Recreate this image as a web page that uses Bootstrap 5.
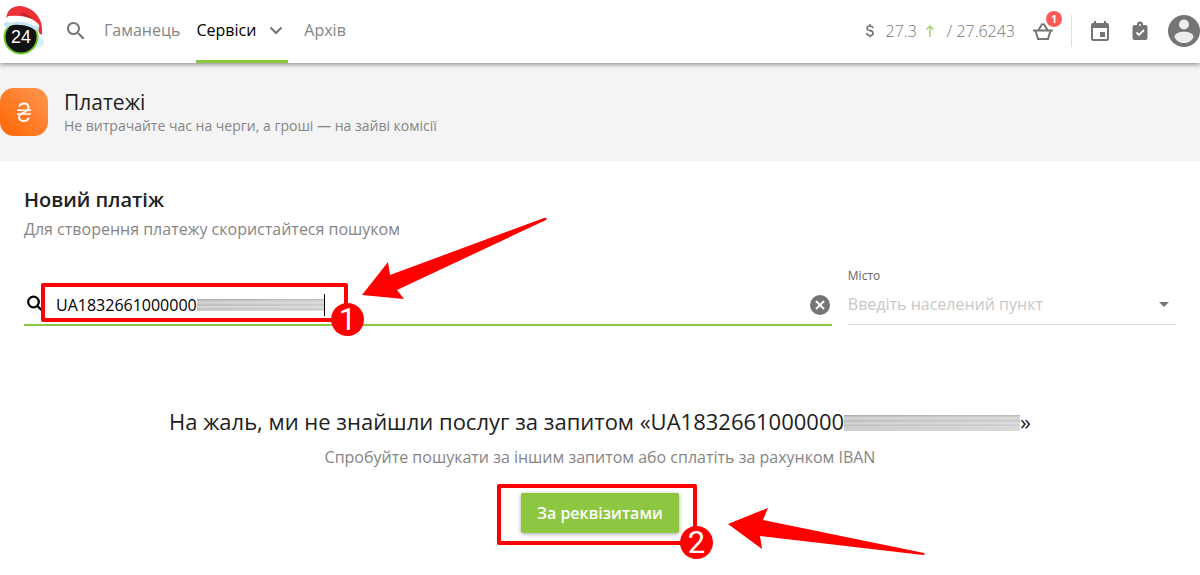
<!DOCTYPE html>
<html lang="uk">
<head>
<meta charset="utf-8">
<meta name="viewport" content="width=device-width, initial-scale=1">
<title>Платежі</title>
<link href="https://cdn.jsdelivr.net/npm/bootstrap@5.3.0/dist/css/bootstrap.min.css" rel="stylesheet">
<style>
  body { font-family: "Open Sans", "Noto Sans", sans-serif; font-size: 16px; line-height: 24px; font-weight: 400; color: #212121; background: #fff; min-height: 100vh; }
  svg { display: block; flex: none; }
  .topbar { height: 63px; background: #fff; box-shadow: 0 1px 5px rgba(0,0,0,.5); z-index: 2; }
  .brand-logo { margin-left: 2px; padding-bottom: 2px; }
  .search-btn { margin-left: 18px; padding-bottom: 2px !important; }
  .icon-btn { background: none; border: 0; padding: 0; color: #757575; }
  .main-menu { gap: 16px; margin-left: 16px; }
  .main-menu .nav-link { color: #858585; padding: 0; height: 63px; display: flex; align-items: center; border-bottom: 3px solid transparent; }
  .main-menu .nav-link.active { color: #000; border-bottom-color: #8dc641; }
  .rates { color: #757575; font-weight: 300; padding-bottom: 2px; }
  .rates .up { color: #a5d46a; }
  .basket-count { position: absolute; left: 15px; top: -8px; width: 16px; height: 16px; border-radius: 50%; background: #ff5a5a; color: #fff; font: 700 10px/16px "Open Sans", sans-serif; text-align: center; }
  .split { width: 1px; height: 32px; background: #ddd; }
  .page-head { background: #f4f4f4; height: 98px; }
  .tile { width: 48px; height: 48px; border-radius: 14px; background: linear-gradient(45deg, #ff6f12 20%, #ff9650); }
  .page-title { font-size: 21px; line-height: 28px; font-weight: 400; }
  .page-sub { font-size: 14px; line-height: 20px; color: #858585; }
  .section-title { font-size: 20px; line-height: 28px; font-weight: 600; margin-bottom: 3px; padding-top: 1px; }
  .muted { color: #858585; }
  .search-grid { display: grid; grid-template-columns: minmax(0, 32fr) minmax(0, 13fr); gap: 16px; margin-top: 27px; }
  .field-label { font-size: 12px; line-height: 16px; color: #666; display: block; }
  .search-box { height: 40px; border-bottom: 2px solid #8dc641; margin-top: 18px; }
  .city-box { height: 41px; border-bottom: 1px solid #ddd; }
  .bare { border: 0; background: none; outline: 0; padding: 0; color: #000; min-width: 0; }
  .bare::placeholder { color: #c8c8c8; opacity: 1; }
  .account { width: 141px; }
  .smear { background: linear-gradient(90deg, rgba(255,255,255,.05), rgba(255,255,255,.25)), linear-gradient(#aaa 0 1px, #cdcdcd 2px 5px, #aaa 6px, #d0d0d0 7px 9px, #b4b4b4 10px, #ccc 11px); }
  .smear-sm { width: 127px; height: 12px; }
  .smear-lg { width: 176px; height: 16px; display: inline-block; vertical-align: -1px; }
  .caret { width: 1px; height: 22px; background: #000; }
  .result-title { font-size: 22px; line-height: 32px; margin: 0 0 8px; padding-top: 7px; }
  .pay-btn { height: 40px; padding: 0 16px; border: 0; border-radius: 2px; background: #8dc641; color: #fff; font-weight: 600; box-shadow: 0 1px 4px rgba(0,0,0,.35); }
  /* Instruction callouts drawn over the form */
  .callout-frame { position: absolute; border: 4px solid #f00; border-radius: 2px; pointer-events: none; }
  .frame-one { left: 17px; top: -3px; width: 307px; height: 39px; }
  .frame-two { left: -24px; top: -9px; right: -18px; bottom: -12px; }
  .step-dot { position: absolute; right: -20px; bottom: -18px; width: 33px; height: 33px; border-radius: 50%; background: #f00; color: #fff; font: 400 31px/34px Roboto, sans-serif; text-align: center; }
  .arrow-one { position: absolute; left: 336px; top: -70px; pointer-events: none; }
  .arrow-two { position: absolute; left: 205px; top: 13px; pointer-events: none; }
</style>
</head>
<body>
<header class="topbar position-relative d-flex align-items-center">
  <a href="#" class="brand-logo" aria-label="24">
    <svg width="44" height="52" viewBox="0 0 44 52">
      <circle cx="37" cy="37" r="5" fill="#d3effb"/>
      <circle cx="19" cy="32" r="17.500" fill="#73c92d"/>
      <circle cx="19" cy="32" r="15.500" fill="#101214"/>
      <path d="M4 14C5 6 9 1 18 1C30 2 42 12 40 29Q37 31 36 23Q27 11 4 14Z" fill="#ed3136"/>
      <path d="M19 7Q28 9 33 18Q25 13 20 12Z" fill="#c62028"/>
      <path d="M4 20C2 14 5 10 10 11C20 10 32 13 37 20C38 23 36 25 33 23C27 19 20 18 14 19Q8 18 4 20Z" fill="#fff"/>
      <path d="M3 22C1 19 3 16 6 17Q9 18 14 17Q21 16 28 19Q34 22 37 21Q37 27 33 25Q26 20 18 20Q8 19 4 24Z" fill="#c3e5f4"/>
      <text x="19" y="38" text-anchor="middle" font-family="Liberation Sans, sans-serif" font-size="18" fill="#fff">24</text>
    </svg>
  </a>
  <button class="icon-btn search-btn" aria-label="Пошук">
    <svg width="24" height="24" viewBox="0 0 24 24" fill="currentColor"><path d="M15.500 14h-.8l-.3-.3A6.500 6.500 0 1 0 13.700 14.400l.3.3v.8l5 5 1.500-1.500zM9.500 14a4.500 4.500 0 1 1 0-9 4.500 4.500 0 0 1 0 9z"/></svg>
  </button>
  <nav class="nav main-menu flex-nowrap">
    <a class="nav-link" href="#">Гаманець</a>
    <a class="nav-link active" href="#">Сервіси
      <svg class="ms-2" width="24" height="24" viewBox="0 0 24 24" fill="none" stroke="#757575" stroke-width="2"><path d="M6.500 9.500l5.500 5.500 5.500-5.500"/></svg>
    </a>
    <a class="nav-link" href="#">Архів</a>
  </nav>
  <div class="d-flex align-items-center ms-auto rates">
    <svg class="me-2" width="16" height="16" viewBox="0 0 16 16" fill="none" stroke="#757575" stroke-width="1.600"><path d="M11 5.200C10.800 3.700 9.600 3 8 3 6.200 3 5 3.900 5 5.200c0 3.200 6.200 1.600 6.200 5 0 1.400-1.300 2.300-3.200 2.300-1.800 0-3.100-.8-3.300-2.500M8 1v2m0 9.500v2"/></svg>
    <span>27.3</span>
    <svg class="up mx-2" width="10" height="24" viewBox="0 0 10 24" fill="none" stroke="currentColor" stroke-width="1.500"><path d="M5 18V7M1.500 10.500L5 7l3.500 3.500"/></svg>
    <span class="ms-1">/ 27.6243</span>
    <button class="icon-btn position-relative ms-3" aria-label="Кошик">
      <svg width="24" height="24" viewBox="0 0 24 24" fill="none" stroke="currentColor" stroke-width="2"><path d="M2 11.500h20M4.500 11.500l2.500 8.500h10l2.500-8.500M7.500 11l4-6.500M16.500 11l-4-6.500"/></svg>
      <span class="basket-count">1</span>
    </button>
    <span class="split ms-3"></span>
    <button class="icon-btn ms-3" aria-label="Календар">
      <svg width="24" height="24" viewBox="0 0 24 24" fill="currentColor"><path d="M17 13h-5v5h5zM16 2v2H8V2H6v2H5a2 2 0 0 0-2 2v14c0 1.100.9 2 2 2h14a2 2 0 0 0 2-2V6a2 2 0 0 0-2-2h-1V2zm3 18H5V9h14z"/></svg>
    </button>
    <button class="icon-btn ms-3" aria-label="Завдання">
      <svg width="24" height="24" viewBox="0 0 24 24"><rect x="4.500" y="6" width="15" height="15" rx="2" fill="#757575"/><path d="M9 7V5.500a3 3 0 0 1 6 0V7z" fill="#757575"/><circle cx="12" cy="6" r="1" fill="#fff"/><path d="M8.500 13.500l2.500 2.500 5-5" fill="none" stroke="#fff" stroke-width="1.800"/></svg>
    </button>
    <button class="icon-btn ms-3" aria-label="Профіль">
      <svg width="32" height="32" viewBox="0 0 32 32"><circle cx="16" cy="16" r="16" fill="#757575"/><circle cx="16" cy="9.500" r="5" fill="#eee"/><path d="M6.500 22c0-7 19-7 19 0-3.500 8-15.500 8-19 0z" fill="#eee"/></svg>
    </button>
  </div>
</header>

<section class="page-head d-flex align-items-center">
  <div class="tile d-flex align-items-center justify-content-center">
    <svg width="18" height="22" viewBox="0 0 18 22" fill="none" stroke="#fff" stroke-width="1.800"><path d="M4 5.500C5 3 7 2.500 9 2.500c3 0 4.500 1.500 4.500 4 0 5-9.500 5-9.500 9.500 0 2.500 2 4 4.800 4C11 20 13 19 14 17"/><path d="M2 9.300h14M2 13h14" stroke-width="1.500"/></svg>
  </div>
  <div class="ms-3">
    <h1 class="page-title mb-0">Платежі</h1>
    <p class="page-sub m-0">Не витрачайте час на черги, а гроші — на зайві комісії</p>
  </div>
</section>

<main class="px-4 pt-4 pb-5">
  <h2 class="section-title">Новий платіж</h2>
  <p class="muted m-0">Для створення платежу скористайтеся пошуком</p>
  <div class="search-grid">
    <div class="search-box position-relative d-flex align-items-center">
      <svg width="24" height="24" viewBox="0 0 24 24" fill="none" stroke="#000" stroke-width="2.200"><circle cx="9.500" cy="9" r="5.300"/><path d="M13.500 13l6 6"/></svg>
      <input class="bare account ms-2" type="text" aria-label="Рахунок" value="UA1832661000000">
      <span class="smear smear-sm"></span><span class="caret"></span>
      <button class="icon-btn ms-auto" aria-label="Очистити">
        <svg width="24" height="24" viewBox="0 0 24 24"><circle cx="12" cy="12" r="10" fill="#757575"/><path d="M8 8l8 8M16 8l-8 8" stroke="#fff" stroke-width="2"/></svg>
      </button>
      <div class="callout-frame frame-one"><span class="step-dot">1</span></div>
      <svg class="arrow-one" width="190" height="86" viewBox="0 0 190 86"><path d="M184 2Q188 1 186 4L37 74 44 83 2 79 28 46 30 59 184 2Z" fill="#f00"/></svg>
    </div>
    <div>
      <label class="field-label" for="city">Місто</label>
      <div class="city-box d-flex align-items-center">
        <input class="bare flex-grow-1" id="city" type="text" placeholder="Введіть населений пункт">
        <svg width="24" height="24" viewBox="0 0 24 24"><path d="M7 10l5 5 5-5z" fill="#757575"/></svg>
      </div>
    </div>
  </div>
  <div class="text-center mt-5 pt-4">
    <p class="result-title">На жаль, ми не знайшли послуг за запитом «UA1832661000000<span class="smear smear-lg"></span>»</p>
    <p class="muted m-0">Спробуйте пошукати за іншим запитом або сплатіть за рахунком IBAN</p>
    <div class="position-relative d-inline-block mt-4">
      <button class="pay-btn">За реквізитами</button>
      <div class="callout-frame frame-two"><span class="step-dot">2</span></div>
      <svg class="arrow-two" width="202" height="50" viewBox="0 0 202 50"><path d="M2 18L42 2 37 14 198 47Q200 49 197 49L34 30 36 43Z" fill="#f00"/></svg>
    </div>
  </div>
</main>
<script src="https://cdn.jsdelivr.net/npm/bootstrap@5.3.0/dist/js/bootstrap.bundle.min.js"></script>
</body>
</html>
